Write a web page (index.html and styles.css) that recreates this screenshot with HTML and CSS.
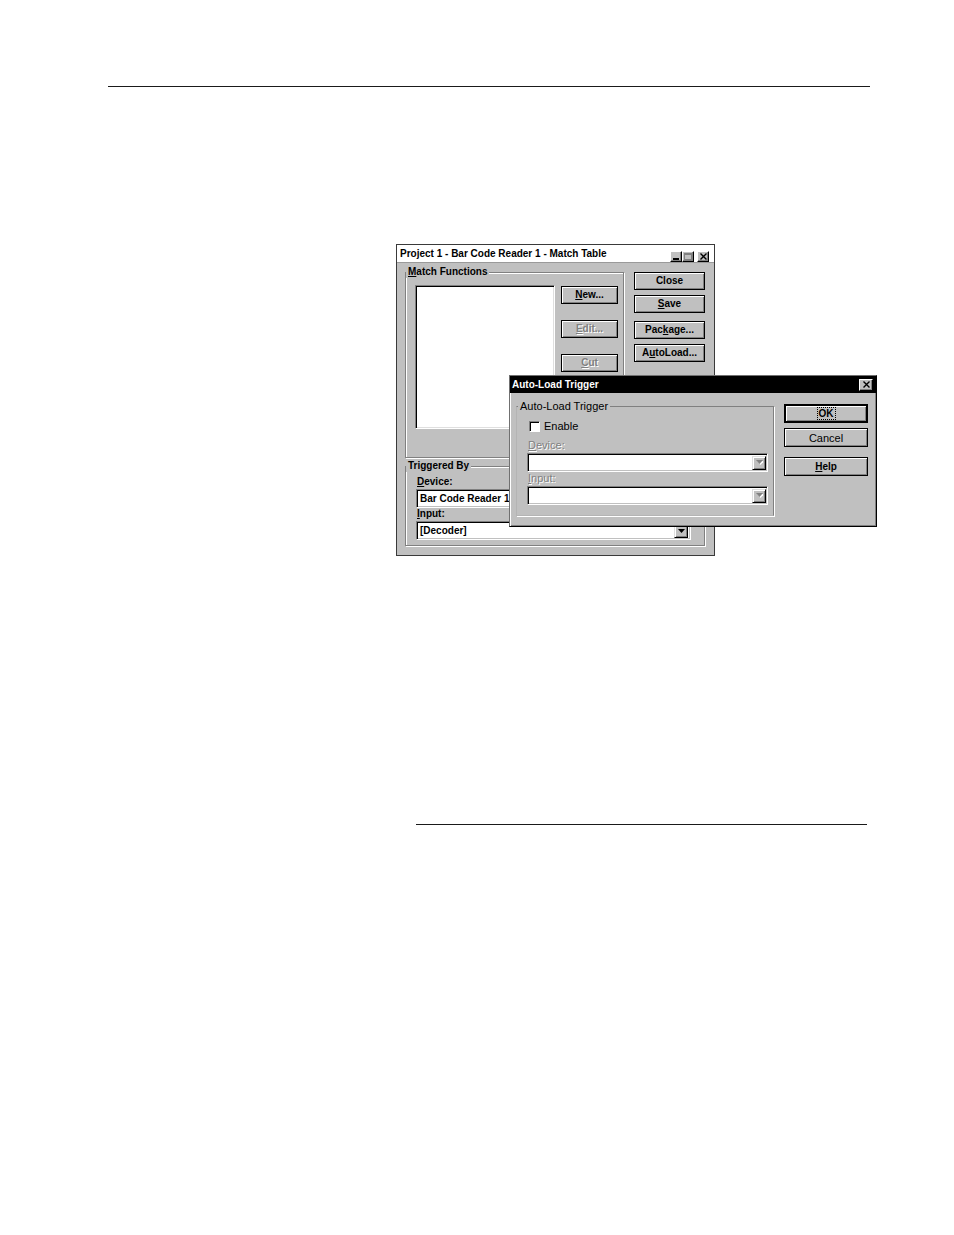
FILE: index.html
```html
<!DOCTYPE html>
<html>
<head>
<meta charset="utf-8">
<title>Match Table - Auto-Load Trigger</title>
<link rel="stylesheet" href="styles.css">
</head>
<body>
<div class="rule rule-top"></div>

<div class="figure">
  <div class="win main-win">
    <div class="titlebar tb-light">
      <span class="tb-text">Project 1 - Bar Code Reader 1 - Match Table</span>
      <div class="tb-btns">
        <span class="tb-btn"><svg width="7" height="7" viewBox="0 0 7 7"><rect x="0" y="5" width="6" height="2" fill="#000"/></svg></span>
        <span class="tb-btn"><svg width="8" height="7" viewBox="0 0 8 7"><rect x="0.5" y="0.5" width="7" height="6" fill="none" stroke="#808080"/><line x1="0" y1="1.5" x2="8" y2="1.5" stroke="#808080"/></svg></span>
        <span class="tb-btn tb-close"><svg width="7" height="7" viewBox="0 0 7 7"><path d="M0.5 0.5 L6.5 6.5 M6.5 0.5 L0.5 6.5" stroke="#000" stroke-width="1.4"/></svg></span>
      </div>
    </div>
    <div class="main-body">
      <div class="top-row">
        <div class="group match-group">
          <span class="group-label"><u>M</u>atch Functions</span>
          <div class="listbox"></div>
          <div class="btn-col">
            <div class="btn"><span><u>N</u>ew...</span></div>
            <div class="btn disabled"><span><u>E</u>dit...</span></div>
            <div class="btn disabled"><span><u>C</u>ut</span></div>
          </div>
        </div>
        <div class="side-col">
          <div class="btn">Close</div>
          <div class="btn btn-gap5"><u>S</u>ave</div>
          <div class="btn btn-gap8">Pac<u>k</u>age...</div>
          <div class="btn btn-gap5">A<u>u</u>toLoad...</div>
        </div>
      </div>
      <div class="group trig-group">
        <span class="group-label">Triggered By</span>
        <div class="field-label"><u>D</u>evice:</div>
        <div class="combo main-combo">
          <span class="combo-text">Bar Code Reader 1</span>
          <span class="drop-btn"><svg width="7" height="4" viewBox="0 0 7 4"><polygon points="0,0 7,0 3.5,4" fill="#000"/></svg></span>
        </div>
        <div class="field-label label-gap"><u>I</u>nput:</div>
        <div class="combo main-combo">
          <span class="combo-text">[Decoder]</span>
          <span class="drop-btn"><svg width="7" height="4" viewBox="0 0 7 4"><polygon points="0,0 7,0 3.5,4" fill="#000"/></svg></span>
        </div>
      </div>
    </div>
  </div>

  <div class="win dialog">
    <div class="titlebar tb-dark">
      <span class="tb-text">Auto-Load Trigger</span>
      <span class="tb-btn dlg-close"><svg width="7" height="7" viewBox="0 0 7 7"><path d="M0.5 0.5 L6.5 6.5 M6.5 0.5 L0.5 6.5" stroke="#000" stroke-width="1.4"/></svg></span>
    </div>
    <div class="dlg-body">
      <div class="group dlg-group">
        <span class="group-label dlg-label">Auto-Load Trigger</span>
        <div class="check-row">
          <span class="checkbox"></span>
          <span class="check-text">Enable</span>
        </div>
        <div class="dlg-field-label dlg-first-label"><u>D</u>evice:</div>
        <div class="combo dlg-combo">
          <span class="combo-text"></span>
          <span class="drop-btn dlg-drop"><svg width="7" height="5" viewBox="0 0 7 5"><polygon points="1,1 8,1 4.5,5" fill="#fff"/><polygon points="0,0 7,0 3.5,4" fill="#808080"/></svg></span>
        </div>
        <div class="dlg-field-label"><u>I</u>nput:</div>
        <div class="combo dlg-combo">
          <span class="combo-text"></span>
          <span class="drop-btn dlg-drop"><svg width="7" height="5" viewBox="0 0 7 5"><polygon points="1,1 8,1 4.5,5" fill="#fff"/><polygon points="0,0 7,0 3.5,4" fill="#808080"/></svg></span>
        </div>
      </div>
      <div class="dlg-btns">
        <div class="btn dbtn btn-default"><span class="focus">OK</span></div>
        <div class="btn dbtn btn-regular btn-gap5">Cancel</div>
        <div class="btn dbtn btn-gap10"><u>H</u>elp</div>
      </div>
    </div>
  </div>
</div>

<div class="rule rule-bottom"></div>
</body>
</html>
```

FILE: styles.css
```css
* {
  box-sizing: border-box;
}

html,
body {
  margin: 0;
  padding: 0;
  background: #fff;
}

body {
  font-family: "Liberation Sans", Arial, sans-serif;
  color: #000;
}

u {
  text-decoration: underline;
  text-underline-offset: 1px;
}

/* page rules */
.rule {
  height: 1px;
  background: #1a1a1a;
}

.rule-top {
  margin: 86px 0 0 108px;
  width: 762px;
}

.rule-bottom {
  margin: 268px 0 0 416px;
  width: 451px;
}

/* figure */
.figure {
  position: relative;
  margin: 157px 0 0 396px;
  width: 319px;
  height: 312px;
}

.win {
  background: #c0c0c0;
  display: flex;
  flex-direction: column;
}

.main-win {
  width: 319px;
  height: 312px;
  border: 1px solid #3a3a3a;
}

/* title bars */
.titlebar {
  flex: none;
  display: flex;
  align-items: center;
  justify-content: space-between;
}

.tb-text {
  font-size: 10px;
  line-height: 12px;
  font-weight: bold;
  white-space: nowrap;
}

.tb-light {
  height: 18px;
  background: #fff;
  border-bottom: 1px solid #9a9a9a;
  padding: 0 5px 0 3px;
}

.tb-btns {
  display: flex;
  align-self: flex-end;
}

.tb-btn {
  width: 12px;
  height: 11px;
  display: flex;
  align-items: center;
  justify-content: center;
  background: #c0c0c0;
  border: 1px solid;
  border-color: #fff #000 #000 #fff;
  box-shadow: inset -1px -1px #808080;
}

.tb-close {
  margin-left: 3px;
}

.tb-dark {
  height: 17px;
  background: #000;
  color: #fff;
  padding: 0 3px 0 2px;
}

.dlg-close {
  width: 14px;
  height: 12px;
}

/* main body */
.main-body {
  flex: 1;
  display: flex;
  flex-direction: column;
  padding: 1px 9px 0 8px;
}

.top-row {
  display: flex;
  gap: 10px;
}

.group {
  position: relative;
  border: 1px solid #808080;
  box-shadow: inset 1px 1px #fff, 1px 1px #fff;
}

.group-label {
  position: absolute;
  top: -7px;
  left: 0;
  padding: 0 2px;
  background: #c0c0c0;
  font-size: 10px;
  line-height: 12px;
  font-weight: bold;
  white-space: nowrap;
}

.match-group {
  flex: none;
  margin-top: 8px;
  width: 219px;
  height: 186px;
  padding: 12px 0 0 9px;
  display: flex;
  align-items: flex-start;
}

.listbox {
  flex: none;
  width: 140px;
  height: 144px;
  background: #fff;
  border: 1px solid;
  border-color: #808080 #fff #fff #808080;
  box-shadow: inset 1px 1px #000, inset -1px -1px #dfdfdf;
}

.btn-col {
  display: flex;
  flex-direction: column;
  gap: 16px;
  width: 57px;
  margin: 1px 0 0 6px;
}

.btn {
  height: 18px;
  display: flex;
  align-items: center;
  justify-content: center;
  background: #c0c0c0;
  border: 1px solid #000;
  box-shadow: inset 1px 1px #fff, inset -1px -1px #808080;
  font-size: 10px;
  line-height: 12px;
  font-weight: bold;
  white-space: nowrap;
}

.btn.disabled {
  color: #808080;
  text-shadow: 1px 1px 0 #fff;
}

.side-col {
  flex: none;
  width: 71px;
  margin-top: 8px;
  display: flex;
  flex-direction: column;
}

.btn-gap5 {
  margin-top: 5px;
}

.btn-gap8 {
  margin-top: 8px;
}

.btn-gap10 {
  margin-top: 10px;
}

/* triggered by */
.trig-group {
  flex: none;
  margin-top: 8px;
  width: 300px;
  height: 80px;
  padding: 9px 0 0 10px;
}

.field-label {
  font-size: 10px;
  line-height: 12px;
  font-weight: bold;
  margin-left: 1px;
}

.label-gap {
  margin-top: 0;
}

.combo {
  height: 19px;
  display: flex;
  align-items: center;
  justify-content: space-between;
  background: #fff;
  border: 1px solid;
  border-color: #808080 #fff #fff #808080;
  box-shadow: inset 1px 1px #000, inset -1px -1px #c0c0c0;
  padding: 0 2px 0 3px;
}

.main-combo {
  width: 275px;
  margin-top: 1px;
}

.combo-text {
  font-size: 10px;
  line-height: 12px;
  font-weight: bold;
  white-space: nowrap;
}

.drop-btn {
  flex: none;
  width: 14px;
  height: 15px;
  display: flex;
  align-items: center;
  justify-content: center;
  background: #c0c0c0;
  border: 1px solid;
  border-color: #dfdfdf #000 #000 #dfdfdf;
  box-shadow: inset 1px 1px #fff, inset -1px -1px #808080;
}

/* dialog */
.dialog {
  position: absolute;
  left: 113px;
  top: 131px;
  width: 368px;
  height: 152px;
  border: 1px solid;
  border-color: #707070 #000 #000 #707070;
  box-shadow: inset 1px 1px #fff, inset -1px -1px #808080;
}

.dlg-body {
  flex: 1;
  display: flex;
  align-items: flex-start;
  padding: 0 8px 0 6px;
}

.dlg-group {
  flex: none;
  margin-top: 13px;
  width: 258px;
  height: 110px;
  padding: 13px 5px 0 10px;
  border-color: #808080 #808080 #b4b4b4 #b4b4b4;
  box-shadow: 1px 1px #fff;
}

.dlg-label {
  font-size: 11px;
  line-height: 13px;
  font-weight: normal;
  left: 1px;
}

.check-row {
  height: 13px;
  display: flex;
  align-items: center;
}

.checkbox {
  width: 11px;
  height: 11px;
  margin-left: 2px;
  background: #fff;
  border: 1px solid;
  border-color: #808080 #fff #fff #808080;
  box-shadow: inset 1px 1px #000;
}

.check-text {
  margin-left: 4px;
  font-size: 11px;
  line-height: 13px;
}

.dlg-field-label {
  font-size: 11px;
  line-height: 13px;
  margin-left: 1px;
  color: #808080;
  text-shadow: 1px 1px 0 #fff;
}

.dlg-first-label {
  margin-top: 6px;
}

.dlg-combo {
  width: 241px;
  margin-top: 1px;
  padding-right: 1px;
}

.dlg-drop {
  width: 14px;
  height: 14px;
  border-color: #dfdfdf #000 #000 #dfdfdf;
}

.dlg-btns {
  flex: none;
  width: 84px;
  margin: 11px 0 0 10px;
  display: flex;
  flex-direction: column;
}

.dbtn {
  height: 19px;
}

.btn-default {
  border-width: 2px;
}

.btn-regular {
  font-size: 11px;
  font-weight: normal;
}

.focus {
  outline: 1px dotted #000;
  outline-offset: 0;
  padding: 0 1px;
  line-height: 11px;
}
```
